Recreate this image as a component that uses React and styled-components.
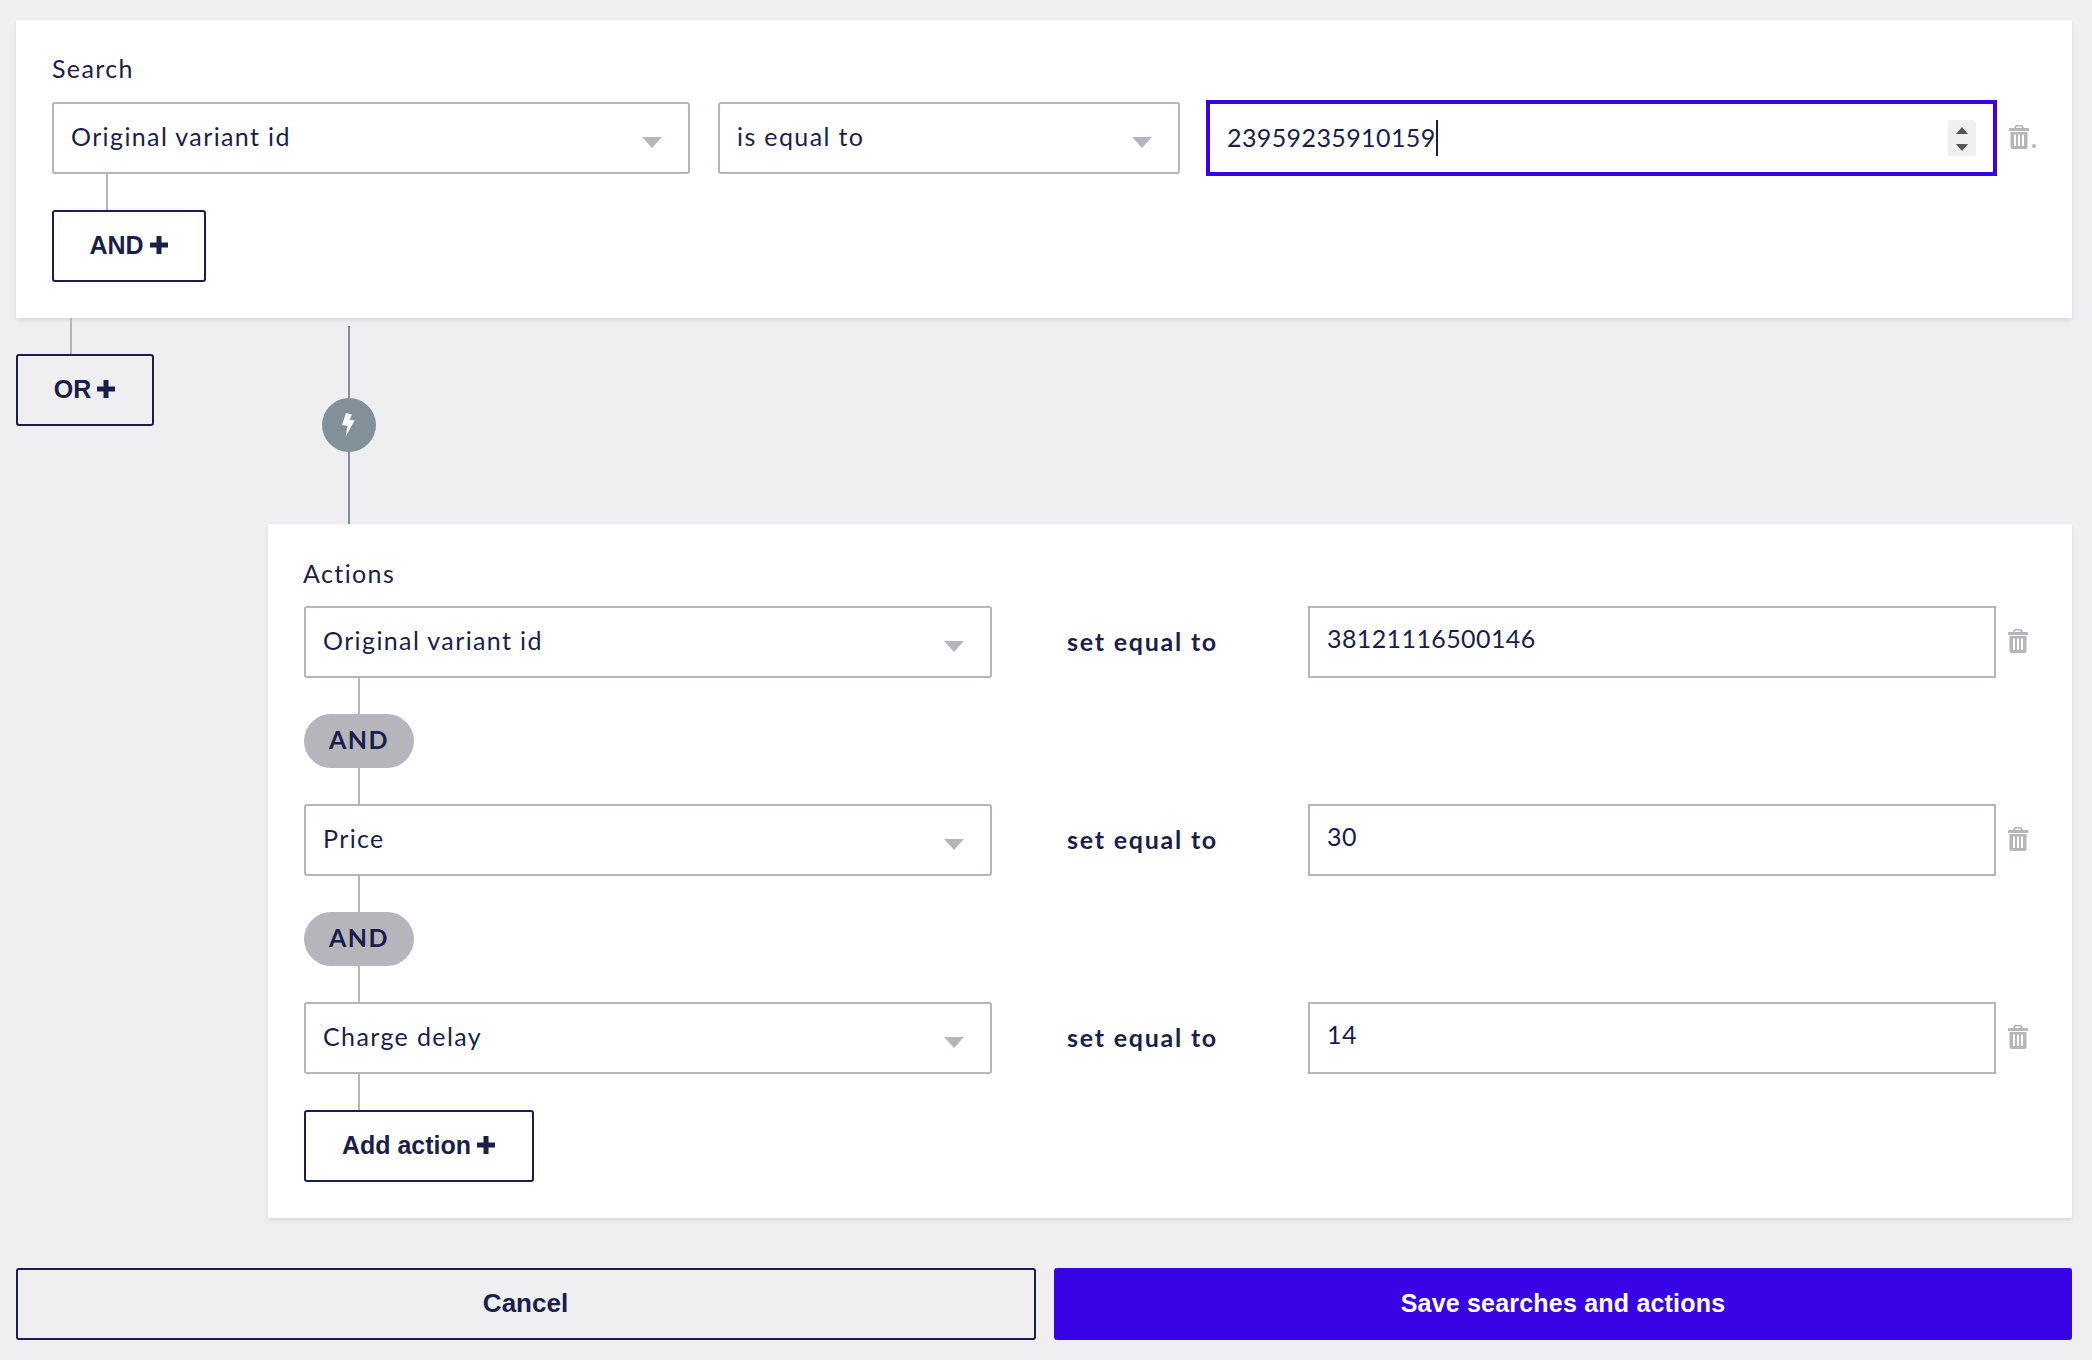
import React from 'react';
import styled, { createGlobalStyle } from 'styled-components';

const NAVY = '#1a1e4a';
const GREY = '#b5b5bb';
const PURPLE = '#3804e6';

const GlobalStyle = createGlobalStyle`
  html, body {
    margin: 0;
    padding: 0;
    background: #efeff1;
  }
  * {
    box-sizing: border-box;
  }
`;

const Page = styled.div`
  width: 2092px;
  height: 1360px;
  padding: 20px 20px 20px 16px;
  display: flex;
  flex-direction: column;
  font-family: Lato, "Open Sans", sans-serif;
  font-size: 25px;
  letter-spacing: 1.38px;
  color: ${NAVY};
  overflow: hidden;
`;

const Card = styled.section`
  background: #fff;
  box-shadow: 0 2px 4px rgba(0, 0, 0, 0.1);
`;

const SearchCard = styled(Card)`
  height: 298px;
  padding: 33px 36px 0;
`;

const ActionsCard = styled(Card)`
  height: 694px;
  margin-left: 252px;
  padding: 34px 36px 0;
`;

const CardTitle = styled.div`
  height: 49px;
  line-height: 30px;
`;

const ActionsTitle = styled(CardTitle)`
  height: 48px;
  margin-left: -1px;
`;

const SearchRow = styled.div`
  display: flex;
  align-items: center;
  height: 72px;
`;

const ActionRow = styled.div`
  display: grid;
  grid-template-columns: 688px 316px 688px 1fr;
  align-items: center;
  height: 72px;
`;

const SelectBox = styled.div`
  position: relative;
  width: ${(p) => p.$width || '100%'};
  height: 72px;
  margin-right: ${(p) => p.$gap || 0};
  flex: none;
  display: flex;
  align-items: center;
  padding-left: 17px;
  padding-bottom: 5px;
  background: #fff;
  border: 2px solid ${GREY};
  border-radius: 3px;
`;

const Arrow = styled.span`
  position: absolute;
  right: 26.5px;
  top: 33px;
  width: 0;
  height: 0;
  border-left: 10px solid transparent;
  border-right: 10px solid transparent;
  border-top: 11px solid ${GREY};
`;

const ValueBox = styled.div`
  height: 72px;
  padding: 15px 0 0 17px;
  line-height: 30px;
  letter-spacing: 0.4px;
  background: #fff;
  border: 2px solid ${GREY};
`;

const FocusBox = styled.div`
  position: relative;
  width: 791px;
  height: 76px;
  flex: none;
  display: flex;
  align-items: center;
  padding-left: 17px;
  padding-bottom: 3px;
  letter-spacing: 0.4px;
  background: #fff;
  border: 4px solid ${PURPLE};
`;

const Caret = styled.span`
  width: 2px;
  height: 36px;
  margin-top: 3px;
  background: ${NAVY};
`;

const Spinner = styled.div`
  position: absolute;
  right: 17px;
  top: 16px;
  width: 28px;
  height: 36px;
  display: flex;
  flex-direction: column;
  align-items: center;
  justify-content: space-between;
  padding: 7px 0 5px;
  background: #f0f0f0;
  border-radius: 2px;
`;

const SpinUp = styled.span`
  width: 0;
  height: 0;
  border-left: 6px solid transparent;
  border-right: 6px solid transparent;
  border-bottom: 7px solid #555;
`;

const SpinDown = styled.span`
  width: 0;
  height: 0;
  border-left: 6px solid transparent;
  border-right: 6px solid transparent;
  border-top: 7px solid #555;
`;

const TrashSlot = styled.div`
  display: flex;
  align-items: flex-end;
  margin: 0 0 2px 12px;
  color: ${GREY};
`;

const Dot = styled.span`
  width: 4px;
  height: 4px;
  margin: 0 0 1px 3px;
  border-radius: 50%;
  background: ${GREY};
`;

const Connector = styled.div`
  width: 2px;
  height: 36px;
  margin-left: ${(p) => p.$left || 54}px;
  background: ${GREY};
`;

const OutlineButton = styled.button`
  display: flex;
  align-items: center;
  justify-content: center;
  gap: 6px;
  width: ${(p) => p.$width}px;
  height: 72px;
  padding: 0 1px 2px 0;
  font-family: "Liberation Sans", Arial, sans-serif;
  font-size: ${(p) => p.$size || 25}px;
  font-weight: 700;
  letter-spacing: 0;
  color: ${NAVY};
  background: transparent;
  border: 2.5px solid ${NAVY};
  border-radius: 3px;
`;

const Pill = styled.div`
  width: 110px;
  height: 54px;
  display: flex;
  align-items: center;
  justify-content: center;
  padding-bottom: 5px;
  font-weight: 700;
  letter-spacing: 1.5px;
  background: ${GREY};
  border-radius: 27px;
`;

const SetLabel = styled.div`
  padding: 0 0 3px 75px;
  font-weight: 700;
  letter-spacing: 1.77px;
`;

const Middle = styled.div`
  height: 206px;
  display: flex;
`;

const OrColumn = styled.div`
  width: 138px;
  flex: none;
`;

const TriggerColumn = styled.div`
  width: 54px;
  margin: 8px 0 0 168px;
  display: flex;
  flex-direction: column;
  align-items: center;
`;

const TriggerLine = styled.div`
  width: 2px;
  flex: 1;
  background: #82909a;
`;

const TriggerBadge = styled.div`
  width: 54px;
  height: 54px;
  display: flex;
  align-items: center;
  justify-content: center;
  padding-right: 2px;
  background: #82909a;
  border-radius: 50%;
`;

const Footer = styled.div`
  margin-top: 50px;
  display: grid;
  grid-template-columns: 1020px 1018px;
  justify-content: space-between;
`;

const SaveButton = styled.button`
  height: 72px;
  padding: 0 0 2px;
  font-family: "Liberation Sans", Arial, sans-serif;
  font-size: 25px;
  font-weight: 700;
  letter-spacing: 0.2px;
  color: #fff;
  background: ${PURPLE};
  border: 0;
  border-radius: 3px;
`;

const PlusIcon = () => (
  <svg width="18" height="18" viewBox="0 0 18 18" fill="currentColor">
    <path d="M6.500 0h5v6.500H18v5h-6.500V18h-5v-6.500H0v-5h6.500z" />
  </svg>
);

const TrashIcon = () => (
  <svg width="20" height="24" viewBox="0 0 20 24" fill="currentColor">
    <path d="M6.500 0h7L15 3h4a1 1 0 0 1 1 1v2H0V4a1 1 0 0 1 1-1h4zM7.700 1.500 7 3h6l-.7-1.500z" fillRule="evenodd" />
    <path d="M1.500 7h17v15a2 2 0 0 1-2 2h-13a2 2 0 0 1-2-2zM5 9.500V21h2V9.500zm4 0V21h2V9.500zm4 0V21h2V9.500z" fillRule="evenodd" />
  </svg>
);

const BoltIcon = () => (
  <svg width="13" height="24" viewBox="0 0 13 24" fill="#fff">
    <path d="M4 0l6 1.800L7.500 7h5.300L3.500 24l2-11L0 12z" />
  </svg>
);

const actions = [
  { field: 'Original variant id', value: '38121116500146' },
  { field: 'Price', value: '30' },
  { field: 'Charge delay', value: '14' },
];

export default function App() {
  return (
    <Page>
      <GlobalStyle />
      <SearchCard>
        <CardTitle>Search</CardTitle>
        <SearchRow>
          <SelectBox $width="638px" $gap="28px">
            Original variant id
            <Arrow />
          </SelectBox>
          <SelectBox $width="462px" $gap="26px">
            is equal to
            <Arrow />
          </SelectBox>
          <FocusBox>
            23959235910159
            <Caret />
            <Spinner>
              <SpinUp />
              <SpinDown />
            </Spinner>
          </FocusBox>
          <TrashSlot>
            <TrashIcon />
            <Dot />
          </TrashSlot>
        </SearchRow>
        <Connector />
        <OutlineButton $width={154}>
          AND
          <PlusIcon />
        </OutlineButton>
      </SearchCard>

      <Middle>
        <OrColumn>
          <Connector />
          <OutlineButton $width={138}>
            OR
            <PlusIcon />
          </OutlineButton>
        </OrColumn>
        <TriggerColumn>
          <TriggerLine />
          <TriggerBadge>
            <BoltIcon />
          </TriggerBadge>
          <TriggerLine />
        </TriggerColumn>
      </Middle>

      <ActionsCard>
        <ActionsTitle>Actions</ActionsTitle>
        {actions.map((action, i) => (
          <React.Fragment key={action.field}>
            <ActionRow>
              <SelectBox>
                {action.field}
                <Arrow />
              </SelectBox>
              <SetLabel>set equal to</SetLabel>
              <ValueBox>{action.value}</ValueBox>
              <TrashSlot>
                <TrashIcon />
              </TrashSlot>
            </ActionRow>
            <Connector />
            {i < actions.length - 1 && (
              <>
                <Pill>AND</Pill>
                <Connector />
              </>
            )}
          </React.Fragment>
        ))}
        <OutlineButton $width={230}>
          Add action
          <PlusIcon />
        </OutlineButton>
      </ActionsCard>

      <Footer>
        <OutlineButton $width={1020} $size={26}>Cancel</OutlineButton>
        <SaveButton>Save searches and actions</SaveButton>
      </Footer>
    </Page>
  );
}
